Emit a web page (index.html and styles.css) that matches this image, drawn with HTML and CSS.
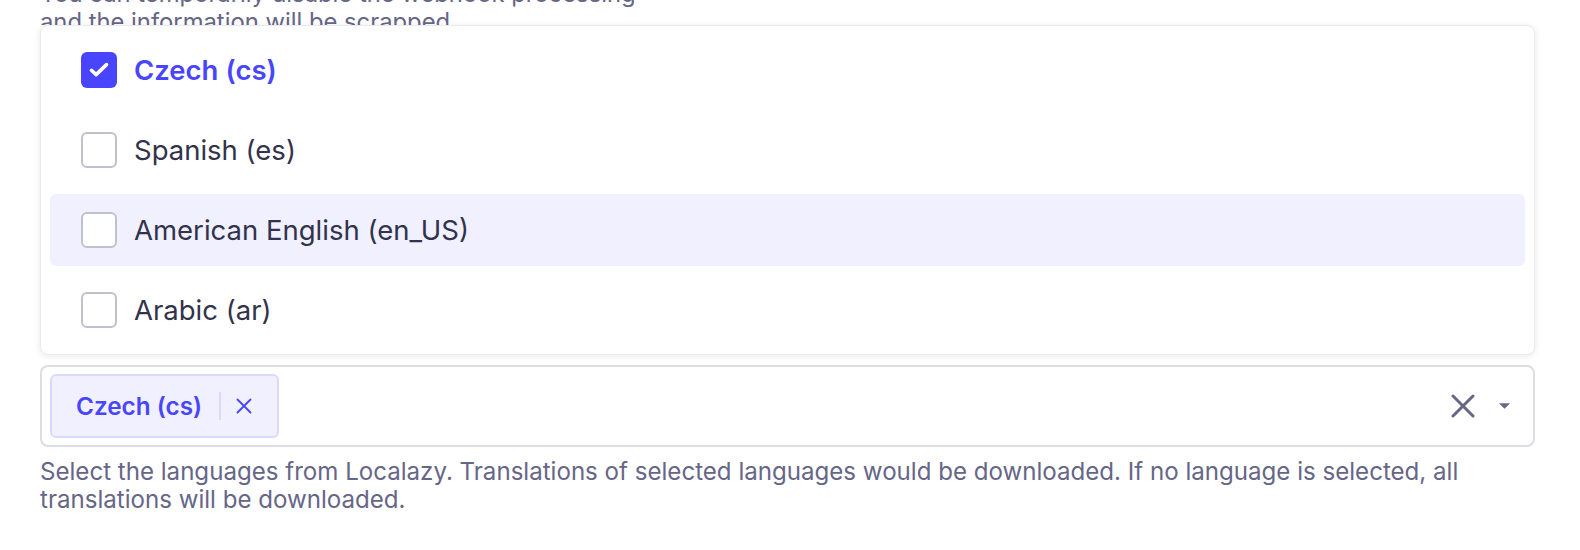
FILE: index.html
```html
<!DOCTYPE html>
<html>
<head>
<meta charset="utf-8">
<meta name="viewport" content="width=device-width, initial-scale=1.0">
<title>Languages</title>
<link rel="stylesheet" href="styles.css">
</head>
<body>
  <div class="field">
    <p class="hint hint-top">You can temporarily disable the webhook processing<br>and the information will be scrapped</p>

    <div class="popover">
      <div class="option selected">
        <span class="checkbox checked">
          <svg viewBox="0 0 36 36" width="36" height="36"><path d="M10.5 18.3l4.6 4.3 10.4-10" fill="none" stroke="#fff" stroke-width="3.6" stroke-linecap="round" stroke-linejoin="round"/></svg>
        </span>
        <span class="label">Czech (cs)</span>
      </div>
      <div class="option">
        <span class="checkbox"></span>
        <span class="label">Spanish (es)</span>
      </div>
      <div class="option hover">
        <span class="checkbox"></span>
        <span class="label">American English (en_US)</span>
      </div>
      <div class="option">
        <span class="checkbox"></span>
        <span class="label">Arabic (ar)</span>
      </div>
    </div>

    <div class="select">
      <div class="tags">
        <span class="tag">
          <span class="tag-text">Czech (cs)</span>
          <span class="tag-sep"></span>
          <svg class="tag-x" viewBox="0 0 16 16" width="16" height="16"><path d="M1.5 1.5l13 13M14.5 1.5l-13 13" stroke="#4945ff" stroke-width="1.8" stroke-linecap="round"/></svg>
        </span>
      </div>
      <div class="actions">
        <svg class="clear" viewBox="0 0 24 24" width="24" height="24"><path d="M2 2l20 20M22 2L2 22" stroke="#666687" stroke-width="3" stroke-linecap="round"/></svg>
        <svg class="caret" viewBox="0 0 14 8" width="13" height="8"><path d="M1 1h12L7 7z" fill="#666687"/></svg>
      </div>
    </div>

    <p class="hint hint-bottom">Select the languages from Localazy. Translations of selected languages would be downloaded. If no language is selected, all translations will be downloaded.</p>
  </div>
</body>
</html>
```

FILE: styles.css
```css
html, body {
  margin: 0;
  padding: 0;
  background: #fff;
  font-family: Inter, "Noto Sans", sans-serif;
  overflow: hidden;
}

.field {
  width: 1495px;
  margin-left: 40px;
  margin-top: -20px;
}

.hint {
  margin: 0;
  color: #666687;
  font-size: 23.8px;
  line-height: 28px;
}

.hint-top {
  height: 45px;
  overflow: hidden;
}

.hint-bottom {
  font-size: 24.1px;
}

.popover {
  position: relative;
  box-sizing: border-box;
  border: 1px solid #eaeaef;
  border-radius: 8px;
  background: #fff;
  box-shadow: 0 1px 6px rgba(33, 33, 52, 0.1);
  padding: 8px 9px;
  display: flex;
  flex-direction: column;
  gap: 8px;
}

.option {
  height: 72px;
  display: flex;
  align-items: center;
  padding-left: 31px;
  border-radius: 6px;
  color: #32324d;
  font-size: 27.5px;
}

.option.hover {
  background: #f0f0ff;
}

.option.selected .label {
  color: #4945ff;
  font-weight: 600;
}

.checkbox {
  box-sizing: border-box;
  width: 36px;
  height: 36px;
  border: 2px solid #c0c0cf;
  border-radius: 6px;
  background: #fff;
  margin-right: 17px;
  display: flex;
  align-items: center;
  justify-content: center;
}

.checkbox.checked {
  border: none;
  background: #4945ff;
}

.select {
  box-sizing: border-box;
  margin-top: 10px;
  height: 82px;
  border: 2px solid #dcdce4;
  border-radius: 8px;
  display: flex;
  align-items: center;
  justify-content: space-between;
  padding: 0 22px 0 8px;
  margin-bottom: 11px;
}

.tag {
  box-sizing: border-box;
  height: 64px;
  display: flex;
  align-items: center;
  background: #f0f0ff;
  border: 2px solid #d9d8ff;
  border-radius: 6px;
  padding: 0 25px 0 24px;
}

.tag-text {
  color: #4945ff;
  font-weight: 600;
  font-size: 24.3px;
}

.tag-sep {
  width: 2px;
  height: 28px;
  background: #d9d8ff;
  margin: 0 15px 0 17px;
}

.actions {
  display: flex;
  align-items: center;
  gap: 23px;
}
```
